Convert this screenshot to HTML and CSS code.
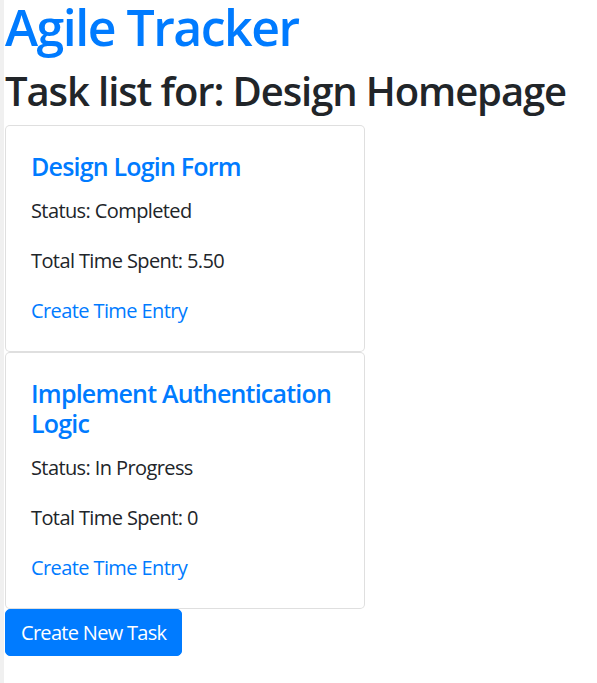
FILE: index.html
```html
<!DOCTYPE html>
<html lang="en">
<head>
<meta charset="utf-8">
<title>Agile Tracker</title>
<link rel="stylesheet" href="styles.css">
</head>
<body>
<h1 class="app-title">Agile Tracker</h1>
<h2 class="page-title">Task list for: Design Homepage</h2>
<div class="task-list">
  <div class="card">
    <div class="card-body">
      <h5 class="card-title">Design Login Form</h5>
      <p class="card-text">Status: Completed</p>
      <p class="card-text">Total Time Spent: 5.50</p>
      <a href="#" class="card-link">Create Time Entry</a>
    </div>
  </div>
  <div class="card">
    <div class="card-body">
      <h5 class="card-title">Implement Authentication Logic</h5>
      <p class="card-text">Status: In Progress</p>
      <p class="card-text">Total Time Spent: 0</p>
      <a href="#" class="card-link">Create Time Entry</a>
    </div>
  </div>
</div>
<a href="#" class="btn-primary">Create New Task</a>
</body>
</html>
```
FILE: styles.css
```css
html, body {
  margin: 0;
  padding: 0;
  background: #fff;
}
body {
  border-left: 4px solid #f0f0f0;
  padding-left: 1px;
  min-height: 683px;
  box-sizing: border-box;
  font-family: "Open Sans", "Noto Sans", sans-serif;
  font-size: 20px;
  line-height: 30px;
  color: #212529;
  letter-spacing: -0.6px;
}
.app-title {
  margin: -3px 0 10px;
  font-size: 50px;
  line-height: 60px;
  font-weight: 600;
  color: #007bff;
  letter-spacing: -1.5px;
}
.page-title {
  margin: 0 0 10px;
  font-size: 40px;
  line-height: 48px;
  font-weight: 600;
  color: #212529;
  letter-spacing: -1.1px;
}
.task-list {
  display: flex;
  flex-direction: column;
}
.card {
  width: 360px;
  box-sizing: border-box;
  border: 1px solid rgba(0, 0, 0, 0.125);
  border-radius: 5px;
  background: #fff;
}
.card-body {
  padding: 25px;
  display: flex;
  flex-direction: column;
  align-items: flex-start;
}
.card-title {
  margin: 0 0 15px;
  font-size: 25px;
  line-height: 30px;
  font-weight: 600;
  color: #007bff;
  letter-spacing: -0.8px;
}
.card-text {
  margin: 0 0 20px;
}
.card-link {
  color: #007bff;
  text-decoration: none;
}
.btn-primary {
  display: inline-block;
  padding: 7.5px 15px;
  border: 1px solid #007bff;
  border-radius: 5px;
  background: #007bff;
  color: #fff;
  text-decoration: none;
  font-size: 20px;
  line-height: 30px;
  letter-spacing: -0.7px;
}
```
